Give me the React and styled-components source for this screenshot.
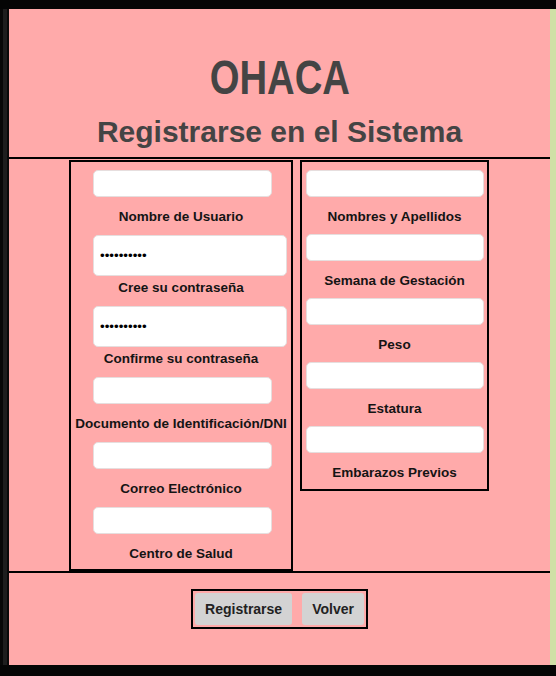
import React from 'react';
import styled, { createGlobalStyle } from 'styled-components';

const Global = createGlobalStyle`
  html, body {
    margin: 0;
    padding: 0;
    background: #050505;
  }
  * {
    box-sizing: border-box;
  }
`;

const Page = styled.div`
  height: 676px;
  display: flex;
  flex-direction: column;
  background: #050505;
  padding-top: 9px;
  padding-bottom: 11px;
`;

const Frame = styled.div`
  flex: 1;
  display: flex;
`;

const LeftEdge = styled.div`
  width: 9px;
  border-left: 3px solid #080808;
  border-right: 2px solid #0a0a0a;
  background: #1e1e1e;
`;

const RightEdge = styled.div`
  width: 6px;
  background: #cfe0a6;
`;

const Sheet = styled.div`
  flex: 1;
  display: flex;
  flex-direction: column;
  background: #ffaaaa;
  font-family: "Liberation Sans", Arial, sans-serif;
`;

const Header = styled.header`
  display: flex;
  flex-direction: column;
  align-items: center;
  padding: 44px 0 10px;
  color: #444;
`;

const Brand = styled.h1`
  margin: 0;
  font-family: "Liberation Sans", Arial, sans-serif;
  font-size: 49px;
  line-height: 49px;
  font-weight: 700;
  transform: scaleX(0.78);
`;

const Title = styled.h2`
  margin: 15px 0 0;
  font-size: 30px;
  line-height: 30px;
  font-weight: 700;
`;

const Middle = styled.section`
  display: flex;
  align-items: flex-start;
  gap: 7px;
  padding: 1px 0 0 60px;
  border-top: 2px solid #000;
  border-bottom: 2px solid #000;
`;

const Column = styled.div`
  width: ${(p) => p.$width}px;
  border: 2px solid #000;
  display: flex;
  flex-direction: column;
  align-items: center;
  padding: 8px 0 ${(p) => p.$bottom}px;
`;

const Input = styled.input`
  width: ${(p) => (p.$tall ? 194 : p.$narrow ? 178 : 179)}px;
  height: ${(p) => (p.$tall ? 41 : 27)}px;
  align-self: ${(p) => (p.$left ? 'flex-start' : 'center')};
  margin: 0 0 ${(p) => (p.$tall ? 4 : 12)}px ${(p) => (p.$left ? 22 : 0)}px;
  padding: 0 6px;
  background: #fff;
  border: 1px solid #e6dede;
  border-radius: 5px;
  font-family: "Liberation Sans", Arial, sans-serif;
  font-size: 13.33px;
  color: #000;
  outline: none;
`;

const Label = styled.label`
  display: block;
  font-size: 13.5px;
  line-height: 16px;
  font-weight: 700;
  color: #141414;
  white-space: nowrap;
  margin-bottom: ${(p) => p.$gap}px;
`;

const Footer = styled.footer`
  flex: 1;
  display: flex;
  justify-content: center;
  align-items: flex-start;
  padding-top: 16px;
`;

const ButtonBar = styled.div`
  display: flex;
  gap: 10px;
  border: 2px solid #000;
  padding: 2px 2px 2px;
`;

const Button = styled.button`
  height: 32px;
  padding: 0 10px;
  border: none;
  border-radius: 3px;
  background: #d3d3d3;
  color: #222;
  font-family: "Liberation Sans", Arial, sans-serif;
  font-size: 14px;
  font-weight: 700;
  cursor: pointer;
`;

const leftFields = [
  { label: 'Nombre de Usuario' },
  { label: 'Cree su contraseña', password: true },
  { label: 'Confirme su contraseña', password: true },
  { label: 'Documento de Identificación/DNI' },
  { label: 'Correo Electrónico' },
  { label: 'Centro de Salud' },
];

const rightFields = [
  'Nombres y Apellidos',
  'Semana de Gestación',
  'Peso',
  'Estatura',
  'Embarazos Previos',
];

export default function App() {
  return (
    <>
      <Global />
      <Page>
        <Frame>
          <LeftEdge />
          <Sheet>
            <Header>
              <Brand>OHACA</Brand>
              <Title>Registrarse en el Sistema</Title>
            </Header>

            <Middle>
              <Column $width={224} $bottom={7}>
                {leftFields.map((f, i) => (
                  <React.Fragment key={f.label}>
                    <Input
                      $left
                      $tall={f.password}
                      type={f.password ? 'password' : 'text'}
                      defaultValue={f.password ? '1234567890' : ''}
                    />
                    <Label $gap={i === leftFields.length - 1 ? 0 : 10}>{f.label}</Label>
                  </React.Fragment>
                ))}
              </Column>

              <Column $width={189} $bottom={8}>
                {rightFields.map((label, i) => (
                  <React.Fragment key={label}>
                    <Input type="text" $narrow />
                    <Label $gap={i === rightFields.length - 1 ? 0 : 9}>{label}</Label>
                  </React.Fragment>
                ))}
              </Column>
            </Middle>

            <Footer>
              <ButtonBar>
                <Button>Registrarse</Button>
                <Button>Volver</Button>
              </ButtonBar>
            </Footer>
          </Sheet>
          <RightEdge />
        </Frame>
      </Page>
    </>
  );
}
